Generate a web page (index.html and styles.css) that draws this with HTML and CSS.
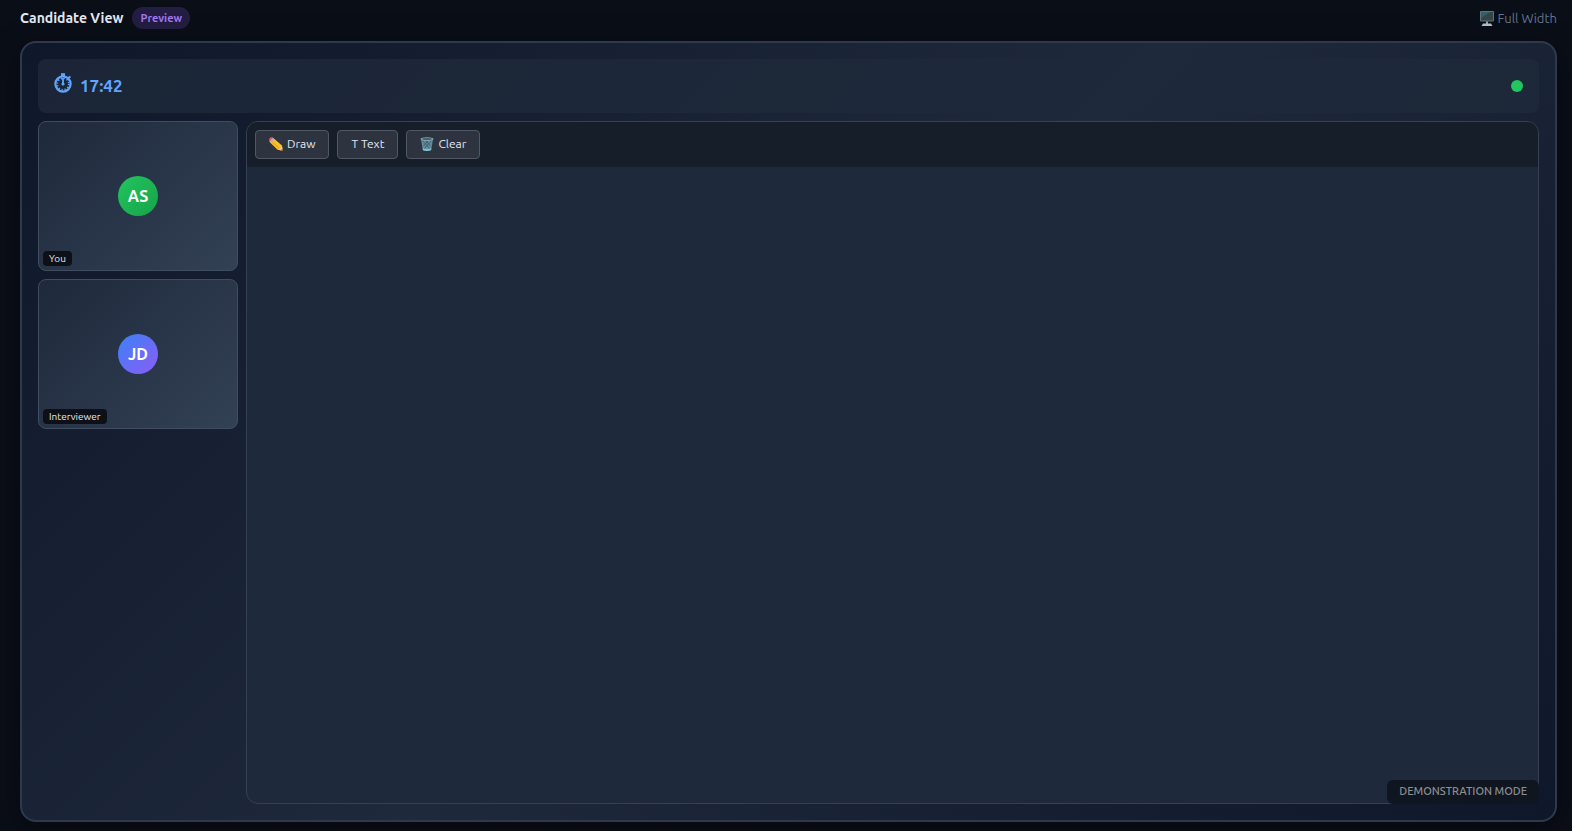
FILE: index.html
```html
<!DOCTYPE html>
<html lang="en">
<head>
  <meta charset="UTF-8">
  <title>Candidate View</title>
  <link rel="stylesheet" href="styles.css">
</head>
<body>
  <header class="page-header">
    <h1>Candidate View</h1>
    <span class="badge">Preview</span>
    <button class="width-toggle" type="button">
      <svg class="icon" viewBox="0 0 14 15" aria-hidden="true">
        <rect x="0" y="0" width="14" height="10.500" rx="1" fill="#64717d"/>
        <rect x="1" y="1" width="12" height="8.500" fill="#35464b"/>
        <path d="M1 1h9l-9 6z" fill="#35606a"/>
        <path d="M6 10.500h2V13H6z" fill="#98a8b5"/>
        <path d="M3 12.500h8l1.500 2.500h-11z" fill="#b3c0c9"/>
      </svg>
      Full Width
    </button>
  </header>

  <main class="frame">
    <div class="status-bar">
      <div class="timer">
        <svg class="timer-icon" viewBox="0 0 18 20" fill="none" stroke="currentColor" aria-hidden="true">
          <circle cx="9" cy="11" r="7.600" stroke-width="2.200"/>
          <path d="M9 4V1" stroke-width="2.600"/>
          <path d="M7 1.600h4" stroke-width="2.800"/>
          <path d="M14 5l2.500-1.500" stroke-width="2"/>
          <path d="M9 5v6" stroke-width="1.800"/>
          <circle cx="9" cy="11" r="1.600" fill="currentColor" stroke="none"/>
          <circle cx="9" cy="11" r="5.800" stroke-width="1.800" stroke-dasharray="1.200 1.837"/>
        </svg>
        <span>17:42</span>
      </div>
      <span class="status-dot"></span>
    </div>

    <div class="content">
      <div class="videos">
        <div class="video">
          <div class="avatar avatar-you">AS</div>
          <span class="video-label">You</span>
        </div>
        <div class="video">
          <div class="avatar avatar-interviewer">JD</div>
          <span class="video-label">Interviewer</span>
        </div>
      </div>

      <div class="whiteboard">
        <div class="toolbar">
          <button class="tool" type="button">
            <svg class="tool-icon" viewBox="0 0 14 14" aria-hidden="true">
              <path d="M4.500 1.200L13 8.500l.9 5.200-5.300-.9L.8 5.200z" fill="#fbc02d"/>
              <path d="M2.200 3.800l8 7.700" stroke="#f9a51a" stroke-width="1.200"/>
              <path d="M3.400 .5l2 1.700-3.400 3.900-1.800-1.800z" fill="#a9b4bd"/>
              <path d="M.6 4.600C-1 2 1.500-.8 4 .8z" fill="#f2555a"/>
              <path d="M12.800 9.500l1.100 4.200-4.300-.9z" fill="#edc59b"/>
              <path d="M13.400 11.900l.5 1.800-1.900-.4z" fill="#333"/>
            </svg>
            Draw
          </button>
          <button class="tool" type="button">T Text</button>
          <button class="tool" type="button">
            <svg class="tool-icon" viewBox="0 0 14 14" aria-hidden="true">
              <path d="M1 2h12l-1.800 11q-4.200 1.800-8.400 0z" fill="#648d9b"/>
              <path d="M3 4l7 8M6 4l4.500 5M11 4l-7 8M8 4l-4.500 5" stroke="#3c5662" stroke-width=".8"/>
              <ellipse cx="7" cy="2" rx="6.500" ry="1.800" fill="#82a9b5"/>
              <ellipse cx="7" cy="2.100" rx="5" ry="1" fill="#46616b"/>
              <path d="M2.700 11.200q4.300 1.500 8.600 0l-.3 2q-4 1.400-8 0z" fill="#7cc0d4"/>
            </svg>
            Clear
          </button>
        </div>
        <div class="canvas"></div>
      </div>
    </div>
    <div class="watermark">DEMONSTRATION MODE</div>
  </main>
</body>
</html>
```

FILE: styles.css
```css
* {
  box-sizing: border-box;
}
body {
  font-family: Ubuntu, "Noto Sans", sans-serif;
  background-color: #0a0e17;
  color: #e2e8f0;
  margin: 0;
  min-height: 100vh;
  padding: 7px 15px 9px 20px;
  display: flex;
  flex-direction: column;
  gap: 12px;
}
button {
  font-family: inherit;
  cursor: pointer;
}
.page-header {
  display: flex;
  align-items: center;
  gap: 9px;
  height: 22px;
}
h1 {
  font-size: 14px;
  font-weight: 600;
  line-height: 20px;
  margin: 0;
}
.badge {
  font-size: 11px;
  font-weight: 600;
  line-height: 14px;
  padding: 4px 8px;
  border-radius: 12px;
  color: #a078ee;
  background-color: rgba(139, 92, 246, 0.2);
}
.width-toggle {
  display: flex;
  align-items: center;
  gap: 4px;
  margin-left: auto;
  padding: 0;
  border: none;
  background: none;
  color: #64748b;
  font-size: 13px;
}
.icon {
  width: 14px;
  height: 15px;
}
.frame {
  position: relative;
  flex: 1;
  display: flex;
  flex-direction: column;
  gap: 8px;
  padding: 16px;
  border: 2px solid #2e394b;
  border-radius: 16px;
  background: linear-gradient(135deg, #0f172a 0%, #1e293b 50%, #0f172a 100%);
  box-shadow: 0 8px 32px rgba(0, 0, 0, 0.4);
}
.status-bar {
  display: flex;
  align-items: center;
  justify-content: space-between;
  height: 54px;
  padding: 0 16px;
  border-radius: 8px;
  background-color: rgba(30, 41, 59, 0.8);
}
.timer {
  display: flex;
  align-items: center;
  gap: 8px;
  padding-bottom: 2px;
  color: #60a5fa;
  font-size: 17px;
  font-weight: 600;
}
.timer-icon {
  width: 18px;
  height: 20px;
  margin-bottom: 4px;
}
.status-dot {
  width: 12px;
  height: 12px;
  border-radius: 50%;
  background-color: #22c55e;
}
.content {
  flex: 1;
  display: flex;
  gap: 8px;
}
.videos {
  display: flex;
  flex-direction: column;
  gap: 8px;
  width: 200px;
}
.video {
  position: relative;
  display: flex;
  align-items: center;
  justify-content: center;
  height: 150px;
  border: 1px solid #414d5e;
  border-radius: 8px;
  background: linear-gradient(135deg, #1e293b, #334155);
}
.avatar {
  display: flex;
  align-items: center;
  justify-content: center;
  width: 40px;
  height: 40px;
  border-radius: 50%;
  color: #fff;
  font-size: 16px;
  font-weight: 600;
}
.avatar-you {
  background: linear-gradient(135deg, #22c55e, #16a34a);
}
.avatar-interviewer {
  background: linear-gradient(135deg, #3b82f6, #8b5cf6);
}
.video-label {
  position: absolute;
  left: 4px;
  bottom: 4px;
  padding: 2px 6px;
  border-radius: 4px;
  background-color: #0d1117;
  font-size: 10px;
  line-height: 11px;
}
.whiteboard {
  flex: 1;
  display: flex;
  flex-direction: column;
  overflow: hidden;
  border: 1px solid #354153;
  border-radius: 12px;
  background-color: #1e293b;
}
.toolbar {
  display: flex;
  gap: 8px;
  padding: 8px;
  background-color: #161e29;
}
.tool {
  display: flex;
  align-items: center;
  gap: 4px;
  height: 29px;
  padding: 0 13px 2px;
  border: 1px solid #525863;
  border-radius: 4px;
  background-color: #2d3440;
  color: #e2e8f0;
  font-size: 12px;
}
.tool-icon {
  width: 14px;
  height: 14px;
}
.canvas {
  flex: 1;
}
.watermark {
  position: absolute;
  right: 16px;
  bottom: 16px;
  padding: 3px 12px 5px;
  border-radius: 6px;
  background-color: #10161f;
  color: #8b8e93;
  font-size: 11px;
  font-weight: 500;
  line-height: 16px;
}
```
